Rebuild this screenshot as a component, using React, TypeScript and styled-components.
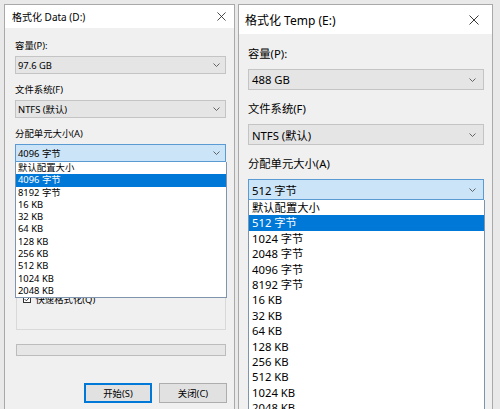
import React from "react"
import styled, { createGlobalStyle, ThemeProvider } from "styled-components"

type Metrics = {
    width: number
    fs: number
    titleFs: number
    titleH: number
    titlePad: number
    closeSize: number
    closeRight: number
    padT: number
    padL: number
    padR: number
    labelH: number
    labelGap: number
    selH: number
    fieldGap: number
    selPad: number
    chevronRight: number
    itemH: number
    groupH: number
}

const small: Metrics = {
    width: 231, fs: 9.4, titleFs: 10, titleH: 23, titlePad: 7, closeSize: 9, closeRight: 8,
    padT: 11, padL: 10, padR: 8, labelH: 14, labelGap: 3, selH: 18, fieldGap: 9,
    selPad: 2, chevronRight: 5, itemH: 12.3, groupH: 159,
}

const large: Metrics = {
    width: 255, fs: 11.3, titleFs: 12, titleH: 29, titlePad: 6, closeSize: 10, closeRight: 13,
    padT: 12, padL: 9, padR: 8, labelH: 16, labelGap: 7, selH: 21, fieldGap: 11,
    selPad: 3, chevronRight: 7, itemH: 15.4, groupH: 0,
}

const GlobalStyle = createGlobalStyle`
    html, body {
        margin: 0;
        height: 409px;
        overflow: hidden;
        background: #e9e9e9;
    }
    body {
        font-family: "Noto Sans", "Noto Sans CJK SC", sans-serif;
        color: #000;
    }
`

const Page = styled.div`
    display: flex;
    align-items: flex-start;
    gap: 3px;
    padding: 4px 0 0 4px;
`

const Dialog = styled.div`
    width: ${p => p.theme.width}px;
    min-height: 420px;
    box-sizing: border-box;
    border: 1px solid #a9a9a9;
    background: #f0f0f0;
    display: flex;
    flex-direction: column;
    font-size: ${p => p.theme.fs}px;
`

const TitleBar = styled.div`
    height: ${p => p.theme.titleH}px;
    background: #fff;
    display: flex;
    align-items: center;
    justify-content: space-between;
    padding: 0 ${p => p.theme.closeRight}px 0 ${p => p.theme.titlePad}px;
    font-size: ${p => p.theme.titleFs}px;
`

const Body = styled.div`
    display: flex;
    flex-direction: column;
    padding: ${p => p.theme.padT}px ${p => p.theme.padR}px 12px ${p => p.theme.padL}px;
`

const Field = styled.div`
    display: flex;
    flex-direction: column;
    margin-bottom: ${p => p.theme.fieldGap}px;
`

const Label = styled.div`
    height: ${p => p.theme.labelH}px;
    line-height: ${p => p.theme.labelH}px;
    margin-bottom: ${p => p.theme.labelGap}px;
    white-space: nowrap;
`

const SelectWrap = styled.div`
    position: relative;
`

const SelectBox = styled.div<{ $focused?: boolean }>`
    height: ${p => p.theme.selH}px;
    box-sizing: border-box;
    display: flex;
    align-items: center;
    justify-content: space-between;
    padding: 0 ${p => p.theme.chevronRight}px 0 ${p => p.theme.selPad}px;
    background: ${p => (p.$focused ? "#cce4f7" : "#e5e5e5")};
    border: 1px solid ${p => (p.$focused ? "#5a9bd4" : "#c4c4c4")};
    white-space: nowrap;
`

const List = styled.ul`
    position: absolute;
    top: 100%;
    left: 0;
    right: -1px;
    z-index: 10;
    margin: 0;
    padding: 0;
    list-style: none;
    background: #fff;
    border: 1px solid #7f94ad;
    border-top: none;
`

const Item = styled.li<{ $selected?: boolean }>`
    height: ${p => p.theme.itemH}px;
    line-height: ${p => p.theme.itemH}px;
    padding-left: ${p => p.theme.selPad}px;
    white-space: nowrap;
    background: ${p => (p.$selected ? "#0078d7" : "transparent")};
    color: ${p => (p.$selected ? "#fff" : "#000")};
`

const GroupBox = styled.div`
    height: ${p => p.theme.groupH}px;
    box-sizing: border-box;
    border: 1px solid #d9d9d9;
    margin-left: 1px;
    display: flex;
    flex-direction: column;
    justify-content: flex-end;
    padding: 0 8px 23px 6px;
`

const CheckRow = styled.div`
    display: flex;
    align-items: center;
    gap: 4px;
    white-space: nowrap;
`

const CheckBox = styled.div`
    width: ${p => p.theme.fs - 1}px;
    height: ${p => p.theme.fs - 1}px;
    box-sizing: border-box;
    border: 1px solid #333;
    background: #fff;
    display: flex;
    align-items: center;
    justify-content: center;
`

const Progress = styled.div`
    height: ${p => p.theme.selH - 6}px;
    box-sizing: border-box;
    margin: 14px 0 0 1px;
    background: #e6e6e6;
    border: 1px solid #bcbcbc;
`

const ButtonRow = styled.div`
    display: flex;
    justify-content: flex-end;
    gap: 7px;
    margin: 27px -1px 0 0;
`

const DialogButton = styled.div<{ $default?: boolean }>`
    width: 68px;
    height: 20px;
    box-sizing: border-box;
    display: flex;
    align-items: center;
    justify-content: center;
    background: #e1e1e1;
    border: 1px solid ${p => (p.$default ? "#0078d7" : "#adadad")};
    box-shadow: ${p => (p.$default ? "inset 0 0 0 1px #0078d7" : "none")};
`

const Chevron = () => (
    <svg width="7" height="4" viewBox="0 0 7 4">
        <path d="M0.5 0.5 L3.5 3.5 L6.5 0.5" fill="none" stroke="#555" strokeWidth="0.9" />
    </svg>
)

const CloseIcon = ({ size }: { size: number }) => (
    <svg width={size} height={size} viewBox="0 0 10 10">
        <path d="M0.5 0.5 L9.5 9.5 M9.5 0.5 L0.5 9.5" stroke="#222" strokeWidth="0.9" />
    </svg>
)

const Check = () => (
    <svg width="7" height="6" viewBox="0 0 7 6">
        <path d="M0.6 3 L2.6 5 L6.4 0.8" fill="none" stroke="#222" strokeWidth="1" />
    </svg>
)

type DriveProps = {
    metrics: Metrics
    title: string
    capacity: string
    selected: string
    options: string[]
    showFooter?: boolean
}

const FormatDialog = ({ metrics, title, capacity, selected, options, showFooter }: DriveProps) => (
    <ThemeProvider theme={metrics}>
        <Dialog>
            <TitleBar>
                <span>{title}</span>
                <CloseIcon size={metrics.closeSize} />
            </TitleBar>
            <Body>
                <Field>
                    <Label>容量(P):</Label>
                    <SelectBox>{capacity}<Chevron /></SelectBox>
                </Field>
                <Field>
                    <Label>文件系统(F)</Label>
                    <SelectBox>NTFS (默认)<Chevron /></SelectBox>
                </Field>
                <Field>
                    <Label>分配单元大小(A)</Label>
                    <SelectWrap>
                        <SelectBox $focused>{selected}<Chevron /></SelectBox>
                        <List>
                            {options.map(o => (
                                <Item key={o} $selected={o === selected}>{o}</Item>
                            ))}
                        </List>
                    </SelectWrap>
                </Field>
                {/* the rest of the form sits under the open list; only its lower part shows */}
                {showFooter && (
                    <>
                        <GroupBox>
                            <CheckRow>
                                <CheckBox><Check /></CheckBox>
                                快速格式化(Q)
                            </CheckRow>
                        </GroupBox>
                        <Progress />
                        <ButtonRow>
                            <DialogButton $default>开始(S)</DialogButton>
                            <DialogButton>关闭(C)</DialogButton>
                        </ButtonRow>
                    </>
                )}
            </Body>
        </Dialog>
    </ThemeProvider>
)

const kbSizes = ["16 KB", "32 KB", "64 KB", "128 KB", "256 KB", "512 KB", "1024 KB", "2048 KB"]

export default function App() {
    return (
        <>
            <GlobalStyle />
            <Page>
                <FormatDialog
                    metrics={small}
                    title="格式化 Data (D:)"
                    capacity="97.6 GB"
                    selected="4096 字节"
                    options={["默认配置大小", "4096 字节", "8192 字节", ...kbSizes]}
                    showFooter
                />
                <FormatDialog
                    metrics={large}
                    title="格式化 Temp (E:)"
                    capacity="488 GB"
                    selected="512 字节"
                    options={["默认配置大小", "512 字节", "1024 字节", "2048 字节", "4096 字节", "8192 字节", ...kbSizes]}
                />
            </Page>
        </>
    )
}
